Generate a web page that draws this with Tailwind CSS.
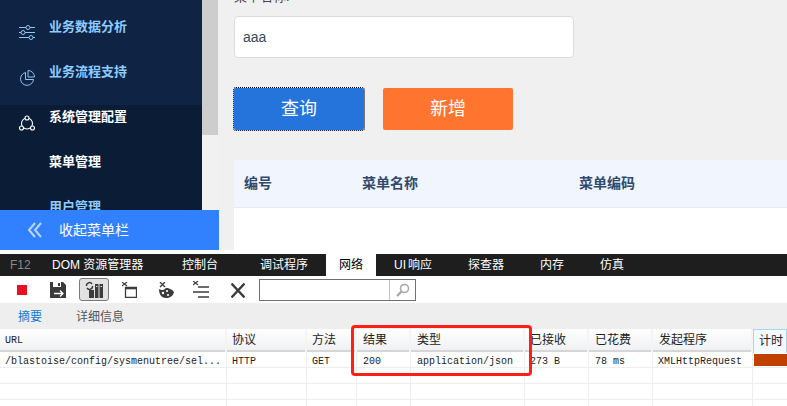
<!DOCTYPE html>
<html lang="zh">
<head>
    <meta charset="UTF-8">
    <title>菜单管理</title>
    <script src="https://cdn.jsdelivr.net/npm/@tailwindcss/browser@4"></script>
</head>
<body class="w-[787px] h-[406px] overflow-hidden bg-white font-['Liberation_Sans','Noto_Sans_CJK_SC',sans-serif]">
    <!-- App -->
    <div class="relative h-[250px] flex bg-[#f0f0f0] overflow-hidden">
        <!-- Sidebar -->
        <aside class="w-[202px] h-[250px] shrink-0 bg-[#0f2344] text-[13px] font-bold">
            <div class="h-[105px] pl-[49px] text-[#8ecbff]">
                <div class="relative h-[52px] pt-[18px] leading-[18px]">
                    业务数据分析
                    <svg class="absolute left-[-30px] top-[25px]" width="16" height="15" viewBox="0 0 16 15" fill="none" stroke="#8fc4f0" stroke-width="1"><path d="M0 2.500h7M11 2.500h5M0 7.500h2M6 7.500h10M0 12.500h10M14 12.500h2"/><circle cx="9" cy="2.500" r="2"/><circle cx="4" cy="7.500" r="2"/><circle cx="12" cy="12.500" r="2"/></svg>
                </div>
                <div class="relative h-[53px] pt-[11px] leading-[18px]">
                    业务流程支持
                    <svg class="absolute left-[-30px] top-[18px]" width="16" height="16" viewBox="0 0 16 16" fill="none" stroke="#8fc4f0" stroke-width="1"><path d="M6.500 2.500A6.500 6.500 0 1 0 14.500 9.500H6.500z"/><path d="M9 .5a6.500 6.500 0 0 1 6.500 6.500H9z"/></svg>
                </div>
            </div>
            <div class="h-[145px] bg-[#0a1c36] pl-[49px] text-white">
                <div class="relative h-[45px] pt-[3px] leading-[18px]">
                    系统管理配置
                    <svg class="absolute left-[-30px] top-[10px]" width="16" height="16" viewBox="0 0 16 16" fill="#0a1c36" stroke="#ffffff" stroke-width="1.100"><circle cx="8" cy="8.500" r="5.500"/><circle cx="8" cy="3" r="2"/><circle cx="2.500" cy="13" r="2"/><circle cx="13.500" cy="13" r="2"/></svg>
                </div>
                <div class="h-[44px] pt-[3px] leading-[18px]">菜单管理</div>
                <div class="pt-[4px] leading-[18px] text-[#8ecbff]">用户管理</div>
            </div>
        </aside>
        <!-- Scrollbar -->
        <div class="w-[16px] h-[250px] shrink-0 bg-[#f1f1f1]">
            <div class="h-[135px] bg-[#cdcdcd]"></div>
        </div>
        <!-- Content -->
        <main class="flex-1 min-w-0 pl-[16px]">
            <div class="h-[16px] -mt-[11px] text-[13px] leading-[16px] text-[#444]">菜单名称:</div>
            <div class="mt-[11px] w-[340px] h-[42px] flex items-center pl-[8px] bg-white border border-[#dcdcdc] rounded-[4px] text-[14px] text-[#3a4a5c]">aaa</div>
            <div class="mt-[30px] flex gap-[19px]">
                <div class="w-[130px] h-[42px] flex items-center justify-center bg-[#2474dc] outline-1 outline-dotted outline-black rounded-[2px] text-[18px] text-white">查询</div>
                <div class="w-[130px] h-[42px] flex items-center justify-center bg-[#ff742e] rounded-[2px] text-[18px] text-white">新增</div>
            </div>
            <div class="mt-[30px] bg-white h-[90px]">
                <div class="h-[48px] flex items-center bg-[#f1f6fe] border-b border-[#e6ebf2] text-[14px] font-bold text-[#30496f]">
                    <div class="w-[128px] pl-[10px]">编号</div>
                    <div class="w-[217px]">菜单名称</div>
                    <div>菜单编码</div>
                </div>
            </div>
        </main>
        <!-- Collapse bar -->
        <div class="absolute left-0 top-[210px] w-[219px] h-[40px] flex items-center bg-[#3181ff] text-[14px] text-white">
            <svg class="ml-[27px] mr-[17px]" width="15" height="16" viewBox="0 0 15 16" fill="none" stroke="#b9d4ff" stroke-width="2"><path d="M8 1 2 8l6 7M14 1 8 8l6 7"/></svg>
            收起菜单栏
        </div>
    </div>

    <!-- Dev tools -->
    <div class="relative h-[156px] pt-[4px] bg-white">
        <div class="h-[22px] flex bg-[#1e1e1e] text-[12px] leading-[22px] text-white relative">
            <div class="w-[52px] pl-[10px] text-[#8a8a8a]">F12</div>
            <div class="w-[130px]">DOM 资源管理器</div>
            <div class="w-[78px]">控制台</div>
            <div class="w-[66px]">调试程序</div>
            <div class="w-[50px] bg-white text-black text-center">网络</div>
            <div class="w-[18px]"></div>
            <div class="w-[74px]">UI<span class="ml-[2px]">响应</span></div>
            <div class="w-[72px]">探查器</div>
            <div class="w-[60px]">内存</div>
            <div>仿真</div>
        </div>
        <!-- Toolbar -->
        <div class="h-[27px] flex items-center text-[#444]">
            <div class="ml-[17px] w-[10px] h-[10px] bg-[#e81123]"></div>
            <!-- save -->
            <svg class="ml-[23px]" width="16" height="16" viewBox="0 0 16 16"><path fill="#3b3b3b" d="M0 0h13l3 3v13H0z"/><path fill="#fff" d="M3 0h8v5H3z"/><path fill="#3b3b3b" d="M8 1h2v3H8z"/><path fill="none" stroke="#fff" stroke-width="1.300" d="M4 11.500h9M10 8.500l3 3-3 3"/></svg>
            <!-- clear on navigate, active -->
            <div class="ml-[13px] w-[30px] h-[23px] flex items-center justify-center bg-[#e2e2e2] border border-[#7a7a7a] rounded-[3px]">
                <svg width="18" height="17" viewBox="0 0 18 17"><path d="M1.500 5A3 3 0 0 1 7 3M7.500 5A3 3 0 0 1 2 7" fill="none" stroke="#3b3b3b" stroke-width="1.400"/><path fill="#3b3b3b" d="M4 9h5v8H4zM10 3h3.500v14H10zM14.500 3H18v14h-3.500z"/><path fill="#e2e2e2" d="M11 5h1.500v1H11zM15.500 5H17v1h-1.500z"/></svg>
            </div>
            <!-- clear sessions -->
            <svg class="ml-[13px]" width="15" height="16" viewBox="0 0 15 16" fill="none" stroke="#3b3b3b"><path d="M3.500 5.500h11v10h-11z" stroke-width="1.300"/><path d="M3 6.500h12" stroke-width="1.600"/><path d="M0 0l5 4M5 0 0 4" stroke-width="1.200"/></svg>
            <!-- cookies -->
            <svg class="ml-[21px]" width="16" height="16" viewBox="0 0 16 16"><path fill="#3b3b3b" d="M1 7c3 2 5 1 7-1 3 0 7 2 8 4-1 4-4 6-8 6-4 0-7-3-7-9z"/><circle cx="5" cy="11" r="1.200" fill="#fff"/><circle cx="9" cy="9" r="1.100" fill="#fff"/><circle cx="10" cy="13" r="1.100" fill="#fff"/><path stroke="#3b3b3b" stroke-width="1.300" d="M2 0l5 5M7 0 2 5"/></svg>
            <!-- clear list -->
            <svg class="ml-[19px]" width="16" height="17" viewBox="0 0 16 17" fill="none" stroke="#3b3b3b"><path d="M5 6h11M0 11h16M5 16h11" stroke-width="1.600"/><path d="M0 0l5 4M5 0 0 4" stroke-width="1.200"/></svg>
            <!-- close -->
            <svg class="ml-[22px] mt-[2px]" width="14" height="15" viewBox="0 0 14 15" stroke="#3b3b3b" stroke-width="2.300"><path d="M.5 .5l13 14M13.500 .5l-13 14"/></svg>
            <div class="ml-[14px] w-[157px] h-[22px] flex justify-end border border-[#707070]">
                <div class="w-[26px] flex items-center justify-center border-l border-[#c4c4c4]">
                    <svg width="14" height="14" viewBox="0 0 14 14" fill="none" stroke="#a8a8a8"><circle cx="8.500" cy="5.500" r="4" stroke-width="1.600"/><path d="M5.500 8.500 1 13" stroke-width="2.400"/></svg>
                </div>
            </div>
        </div>
        <!-- Sub tabs -->
        <div class="h-[26px] flex items-center pt-[1px] bg-[#eeeeee] text-[12px]">
            <div class="w-[76px] pl-[18px] text-[#0f7bd3]">摘要</div>
            <div class="text-[#555]">详细信息</div>
        </div>
        <!-- Network table -->
        <div class="font-['Liberation_Mono','Noto_Sans_CJK_SC',monospace] text-[10px] text-[#222]">
            <div class="h-[23px] grid grid-cols-[227px_80px_50px_54px_114px_64px_64px_100px_34px] items-stretch leading-[23px] bg-gradient-to-b from-white to-[#f0f1f3] border-b-2 border-[#d6d6d6] font-['Liberation_Sans','Noto_Sans_CJK_SC',sans-serif] text-[12px]">
                <div class="pl-[5px] border-r-2 border-[#f4f4f4] font-['Liberation_Mono',monospace] text-[10px]">URL</div>
                <div class="pl-[5px] border-r-2 border-[#f4f4f4]">协议</div>
                <div class="pl-[5px] border-r-2 border-[#f4f4f4]">方法</div>
                <div class="pl-[6px] border-r-2 border-[#f4f4f4]">结果</div>
                <div class="pl-[6px] border-r-2 border-[#f4f4f4]">类型</div>
                <div class="pl-[5px] border-r-2 border-[#f4f4f4]">已接收</div>
                <div class="pl-[6px] border-r-2 border-[#f4f4f4]">已花费</div>
                <div class="pl-[6px] border-r-2 border-[#f4f4f4]">发起程序</div>
                <div class="pl-[5px] border border-b-0 border-[#a9d6f5] bg-[#f3f9fd]">计时</div>
            </div>
            <div class="h-[16px] grid grid-cols-[227px_80px_50px_54px_114px_64px_64px_100px_34px] leading-[19px] border-b border-[#eeeeee]">
                <div class="pl-[5px] border-r border-[#eeeeee] whitespace-nowrap">/blastoise/config/sysmenutree/sel...</div>
                <div class="pl-[5px] border-r border-[#eeeeee]">HTTP</div>
                <div class="pl-[5px] border-r border-[#eeeeee]">GET</div>
                <div class="pl-[6px] border-r border-[#eeeeee]">200</div>
                <div class="pl-[6px] border-r border-[#eeeeee]">application/json</div>
                <div class="pl-[5px] border-r border-[#eeeeee]">273 B</div>
                <div class="pl-[6px] border-r border-[#eeeeee]">78 ms</div>
                <div class="pl-[5px] border-r border-[#eeeeee]">XMLHttpRequest</div>
                <div class="pl-[1px] pt-[2px]"><div class="h-[12px] bg-[#c04000]"></div></div>
            </div>
            <div class="h-[16px] grid grid-cols-[227px_80px_50px_54px_114px_64px_64px_100px_34px] border-b border-[#eeeeee]">
                <div class="border-r border-[#eeeeee]"></div><div class="border-r border-[#eeeeee]"></div><div class="border-r border-[#eeeeee]"></div><div class="border-r border-[#eeeeee]"></div><div class="border-r border-[#eeeeee]"></div><div class="border-r border-[#eeeeee]"></div><div class="border-r border-[#eeeeee]"></div><div class="border-r border-[#eeeeee]"></div><div></div>
            </div>
            <div class="h-[16px] grid grid-cols-[227px_80px_50px_54px_114px_64px_64px_100px_34px] border-b border-[#eeeeee]">
                <div class="border-r border-[#eeeeee]"></div><div class="border-r border-[#eeeeee]"></div><div class="border-r border-[#eeeeee]"></div><div class="border-r border-[#eeeeee]"></div><div class="border-r border-[#eeeeee]"></div><div class="border-r border-[#eeeeee]"></div><div class="border-r border-[#eeeeee]"></div><div class="border-r border-[#eeeeee]"></div><div></div>
            </div>
            <div class="h-[16px] grid grid-cols-[227px_80px_50px_54px_114px_64px_64px_100px_34px]">
                <div class="border-r border-[#eeeeee]"></div><div class="border-r border-[#eeeeee]"></div><div class="border-r border-[#eeeeee]"></div><div class="border-r border-[#eeeeee]"></div><div class="border-r border-[#eeeeee]"></div><div class="border-r border-[#eeeeee]"></div><div class="border-r border-[#eeeeee]"></div><div class="border-r border-[#eeeeee]"></div><div></div>
            </div>
        </div>
        <!-- Red annotation box -->
        <div class="absolute left-[351px] top-[75px] w-[181px] h-[51px] border-[3px] border-[#ff2015] rounded-[4px]"></div>
    </div>
</body>
</html>
